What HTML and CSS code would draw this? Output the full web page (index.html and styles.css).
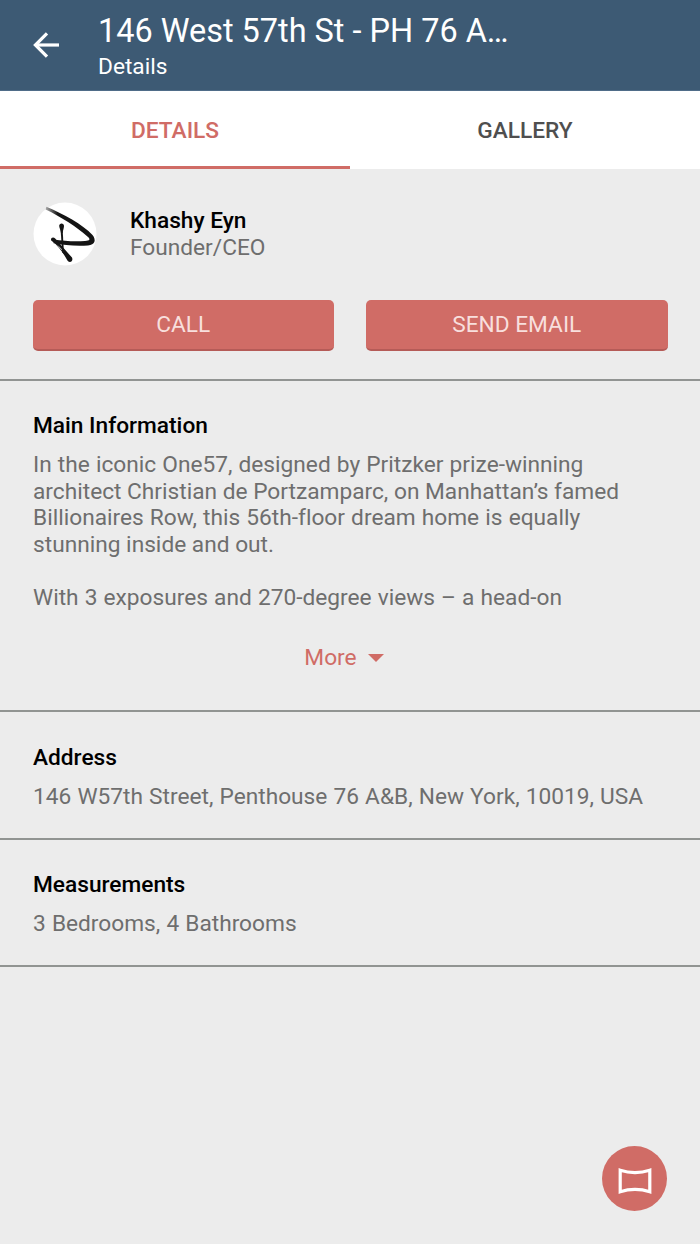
FILE: index.html
```html
<!DOCTYPE html>
<html lang="en">
<head>
    <meta charset="UTF-8">
    <meta name="viewport" content="width=device-width, initial-scale=1.0">
    <title>146 West 57th St - Details</title>
    <link rel="stylesheet" href="styles.css">
</head>
<body>
    <header class="app-bar">
        <a href="#" class="back" aria-label="Back">
            <svg width="26" height="26" viewBox="0 0 26 26" fill="none" stroke="#fff" stroke-width="3.2">
                <path d="M26 13H3"/>
                <path d="M14 1.4L2.4 13L14 24.6"/>
            </svg>
        </a>
        <div class="titles">
            <h1>146 West 57th St - PH 76 A…</h1>
            <span class="subtitle">Details</span>
        </div>
    </header>

    <nav class="tabs">
        <a href="#" class="tab active">DETAILS</a>
        <a href="#" class="tab">GALLERY</a>
    </nav>

    <main>
        <section class="contact">
            <div class="person">
                <svg class="avatar" width="64" height="64" viewBox="0 0 64 64">
                    <defs>
                        <linearGradient id="fade" x1="0" y1="0" x2="1" y2="0">
                            <stop offset="0" stop-color="#aaa"/>
                            <stop offset="0.25" stop-color="#141414"/>
                        </linearGradient>
                    </defs>
                    <circle cx="32" cy="32" r="31.5" fill="#fff"/>
                    <path d="M13.4 4.8C30 12 50 22.5 59.5 33C63.5 38 62 43 55 43.4C43 44.4 31 43 20.5 41.2L20.4 37.6C32 39.3 43 39.8 52 39C57 38.5 57.5 37.4 55 35C43 24.5 28 15 12.6 7.6Z" fill="url(#fade)"/>
                    <path d="M18.2 38.5C17.2 35.6 20.4 34.2 22.2 36.6L39 55.6C40.6 59.3 37 61.6 34.6 58.8C31 52.5 26.5 44.5 18.2 38.5Z" fill="#141414"/>
                    <path d="M23.6 42.4C27.2 45 29.5 47.6 31 50.6Z" fill="#fff"/>
                    <path d="M27.4 25L29.2 50.5L31 52L29.6 27Z" fill="#141414"/>
                    <path d="M26.2 24C26 20.6 31.2 20.6 31 24C31 26 30 28 29.6 31H28C27.8 28 26.4 26.5 26.2 24Z" fill="#141414"/>
                </svg>
                <div>
                    <h2>Khashy Eyn</h2>
                    <p>Founder/CEO</p>
                </div>
            </div>
            <div class="actions">
                <button type="button">CALL</button>
                <button type="button">SEND EMAIL</button>
            </div>
        </section>

        <section class="info">
            <h2>Main Information</h2>
            <p>In the iconic One57, designed by Pritzker prize-winning<br><span class="tight">architect Christian de Portzamparc, on Manhattan’s famed</span><br>Billionaires Row, this 56th-floor dream home is equally<br><span class="tight">stunning inside and out.</span></p>
            <p class="next">With 3 exposures and 270-degree views – a head-on</p>
            <a href="#" class="more">
                More
                <svg width="16" height="8" viewBox="0 0 16 8"><path d="M0 0H16L8 8Z" fill="#d06c66"/></svg>
            </a>
        </section>

        <section class="info">
            <h2>Address</h2>
            <p>146 W57th Street, Penthouse 76 A&amp;B, New York, 10019, USA</p>
        </section>

        <section class="info">
            <h2>Measurements</h2>
            <p>3 Bedrooms, 4 Bathrooms</p>
        </section>
    </main>

    <button type="button" class="fab" aria-label="Panorama">
        <svg width="34" height="28" viewBox="0 0 34 28" fill="none" stroke="#fff" stroke-width="3.2">
            <path d="M2.2 3.2Q17 8 31.8 3.2V24.8Q17 20 2.2 24.8Z"/>
        </svg>
    </button>
</body>
</html>
```

FILE: styles.css
```css
* {
    box-sizing: border-box;
}

body {
    margin: 0;
    min-height: 100vh;
    background-color: #ececec;
    color: #6e6e6e;
    font-family: Roboto, sans-serif;
    font-size: 22.7px;
    line-height: 26.6px;
}

h1, h2, p {
    margin: 0;
}

a {
    color: inherit;
    text-decoration: none;
}

.app-bar {
    display: flex;
    align-items: center;
    gap: 39px;
    height: 91px;
    padding-left: 33px;
    background-color: #3d5a74;
    border-bottom: 1px solid #4f6c88;
    color: #fff;
}

.back svg {
    display: block;
}

.titles {
    display: flex;
    flex-direction: column;
    padding-top: 4px;
}

h1 {
    font-size: 32.45px;
    font-weight: 400;
    line-height: 38px;
    white-space: nowrap;
}

.subtitle {
    line-height: 33px;
}

.tabs {
    display: flex;
    height: 78px;
    background-color: #fff;
}

.tab {
    flex: 1;
    display: flex;
    align-items: center;
    justify-content: center;
    border-bottom: 3px solid transparent;
    padding-top: 5px;
    color: #4f4f4f;
    font-weight: 500;
}

.tab.active {
    color: #d06c66;
    border-bottom-color: #d06c66;
}

.contact {
    height: 212px;
    padding: 33px 32.5px 0;
    border-bottom: 2px solid #919492;
}

.person {
    display: flex;
    align-items: center;
    gap: 33.5px;
    height: 64px;
}

.person div {
    padding-top: 2px;
}

h2 {
    color: #000;
    font-size: 22.7px;
    font-weight: 500;
}

.actions {
    display: flex;
    gap: 32px;
    margin-top: 34px;
}

.actions button {
    flex: 1;
    height: 50.5px;
    padding: 2px 0 0;
    border: none;
    border-bottom: 2px solid #b55b57;
    border-radius: 5px;
    background-color: #d06c66;
    color: #f8dfdd;
    font: inherit;
}

.info {
    padding: 32.3px 33px 27.5px;
    border-bottom: 2px solid #919492;
}

.info h2 {
    margin-bottom: 12.2px;
}

.info p {
    word-spacing: 0.5px;
    font-variant-ligatures: none;
}

.info .tight {
    word-spacing: 0;
}

.info .next {
    margin-top: 26.6px;
}

.more {
    display: flex;
    align-items: center;
    justify-content: center;
    gap: 11.5px;
    margin: 33.5px 0 11.2px;
    padding-right: 11.5px;
    color: #d06c66;
}

.fab {
    position: fixed;
    right: 33px;
    bottom: 33px;
    display: flex;
    align-items: center;
    justify-content: center;
    width: 65px;
    height: 65px;
    padding: 5px 0 0;
    border: none;
    border-radius: 50%;
    background-color: #d06c66;
}
```
